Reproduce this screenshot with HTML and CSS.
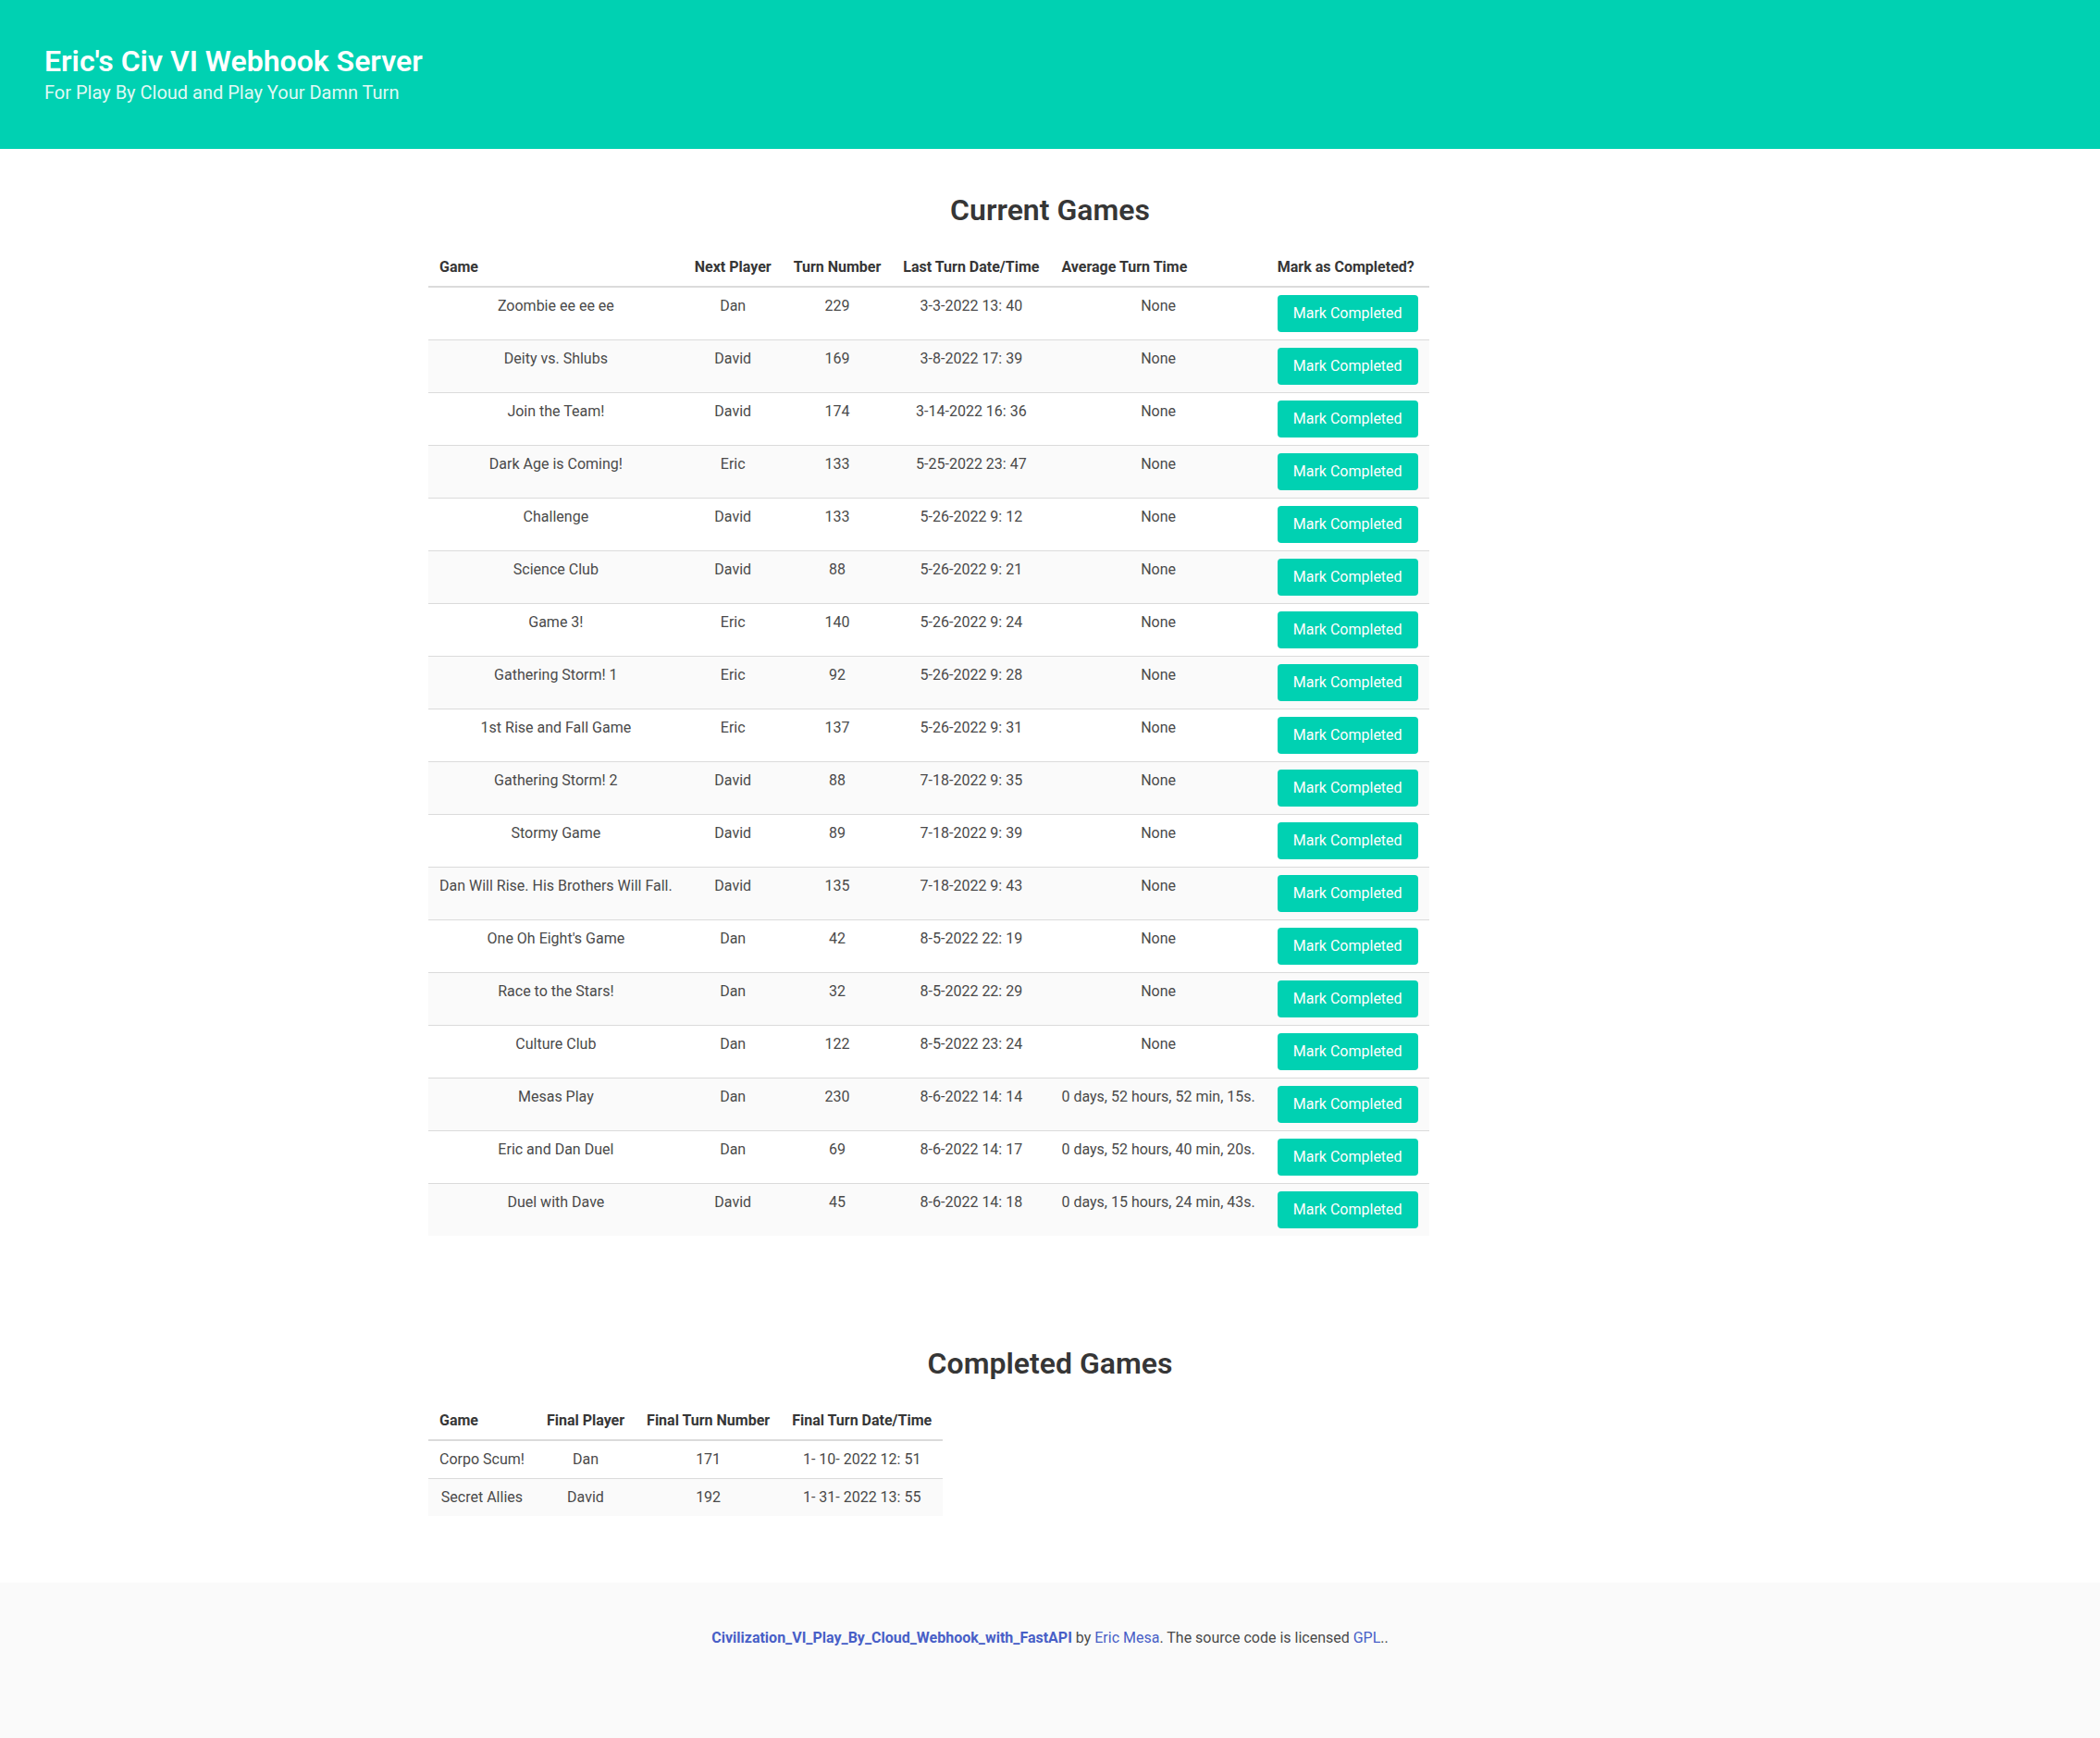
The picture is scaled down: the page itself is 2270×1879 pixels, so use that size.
FILE: index.html
```html
<!DOCTYPE html>
<html lang="en">
<head>
<meta charset="utf-8">
<title>Eric's Civ VI Webhook Server</title>
<link rel="stylesheet" href="styles.css">
</head>
<body>
<section class="hero">
  <div class="hero-body">
    <p class="hero-title">Eric's Civ VI Webhook Server</p>
    <p class="hero-subtitle">For Play By Cloud and Play Your Damn Turn</p>
  </div>
</section>

<section class="section">
  <div class="container">
    <h1 class="title">Current Games</h1>
    <table class="table">
      <thead>
        <tr><th>Game</th><th>Next Player</th><th>Turn Number</th><th>Last Turn Date/Time</th><th>Average Turn Time</th><th>Mark as Completed?</th></tr>
      </thead>
      <tbody>
        <tr><td>Zoombie ee ee ee</td><td>Dan</td><td>229</td><td>3-3-2022 13: 40</td><td>None</td><td class="act"><button class="button">Mark Completed</button></td></tr>
        <tr><td>Deity vs. Shlubs</td><td>David</td><td>169</td><td>3-8-2022 17: 39</td><td>None</td><td class="act"><button class="button">Mark Completed</button></td></tr>
        <tr><td>Join the Team!</td><td>David</td><td>174</td><td>3-14-2022 16: 36</td><td>None</td><td class="act"><button class="button">Mark Completed</button></td></tr>
        <tr><td>Dark Age is Coming!</td><td>Eric</td><td>133</td><td>5-25-2022 23: 47</td><td>None</td><td class="act"><button class="button">Mark Completed</button></td></tr>
        <tr><td>Challenge</td><td>David</td><td>133</td><td>5-26-2022 9: 12</td><td>None</td><td class="act"><button class="button">Mark Completed</button></td></tr>
        <tr><td>Science Club</td><td>David</td><td>88</td><td>5-26-2022 9: 21</td><td>None</td><td class="act"><button class="button">Mark Completed</button></td></tr>
        <tr><td>Game 3!</td><td>Eric</td><td>140</td><td>5-26-2022 9: 24</td><td>None</td><td class="act"><button class="button">Mark Completed</button></td></tr>
        <tr><td>Gathering Storm! 1</td><td>Eric</td><td>92</td><td>5-26-2022 9: 28</td><td>None</td><td class="act"><button class="button">Mark Completed</button></td></tr>
        <tr><td>1st Rise and Fall Game</td><td>Eric</td><td>137</td><td>5-26-2022 9: 31</td><td>None</td><td class="act"><button class="button">Mark Completed</button></td></tr>
        <tr><td>Gathering Storm! 2</td><td>David</td><td>88</td><td>7-18-2022 9: 35</td><td>None</td><td class="act"><button class="button">Mark Completed</button></td></tr>
        <tr><td>Stormy Game</td><td>David</td><td>89</td><td>7-18-2022 9: 39</td><td>None</td><td class="act"><button class="button">Mark Completed</button></td></tr>
        <tr><td>Dan Will Rise. His Brothers Will Fall.</td><td>David</td><td>135</td><td>7-18-2022 9: 43</td><td>None</td><td class="act"><button class="button">Mark Completed</button></td></tr>
        <tr><td>One Oh Eight's Game</td><td>Dan</td><td>42</td><td>8-5-2022 22: 19</td><td>None</td><td class="act"><button class="button">Mark Completed</button></td></tr>
        <tr><td>Race to the Stars!</td><td>Dan</td><td>32</td><td>8-5-2022 22: 29</td><td>None</td><td class="act"><button class="button">Mark Completed</button></td></tr>
        <tr><td>Culture Club</td><td>Dan</td><td>122</td><td>8-5-2022 23: 24</td><td>None</td><td class="act"><button class="button">Mark Completed</button></td></tr>
        <tr><td>Mesas Play</td><td>Dan</td><td>230</td><td>8-6-2022 14: 14</td><td>0 days, 52 hours, 52 min, 15s.</td><td class="act"><button class="button">Mark Completed</button></td></tr>
        <tr><td>Eric and Dan Duel</td><td>Dan</td><td>69</td><td>8-6-2022 14: 17</td><td>0 days, 52 hours, 40 min, 20s.</td><td class="act"><button class="button">Mark Completed</button></td></tr>
        <tr><td>Duel with Dave</td><td>David</td><td>45</td><td>8-6-2022 14: 18</td><td>0 days, 15 hours, 24 min, 43s.</td><td class="act"><button class="button">Mark Completed</button></td></tr>
      </tbody>
    </table>
  </div>
</section>

<section class="section">
  <div class="container">
    <h1 class="title">Completed Games</h1>
    <table class="table">
      <thead>
        <tr><th>Game</th><th>Final Player</th><th>Final Turn Number</th><th>Final Turn Date/Time</th></tr>
      </thead>
      <tbody>
        <tr><td>Corpo Scum!</td><td>Dan</td><td>171</td><td>1- 10- 2022 12: 51</td></tr>
        <tr><td>Secret Allies</td><td>David</td><td>192</td><td>1- 31- 2022 13: 55</td></tr>
      </tbody>
    </table>
  </div>
</section>

<footer class="footer">
  <div class="content">
    <p><strong><a href="#">Civilization_VI_Play_By_Cloud_Webhook_with_FastAPI</a></strong> by <a href="#">Eric Mesa</a>. The source code is licensed <a href="#">GPL</a>..</p>
  </div>
</footer>
</body>
</html>
```

FILE: styles.css
```css
html {
  background: #fff;
  font-size: 16px;
}
body {
  margin: 0;
  font-family: Roboto, "Noto Sans", "Liberation Sans", sans-serif;
  font-size: 1em;
  line-height: 1.5;
  color: #4a4a4a;
  font-weight: 400;
}
p, h1 { margin: 0; }
a { color: #485fc7; text-decoration: none; }
strong { color: #363636; font-weight: 700; }
strong a { color: #485fc7; }

.hero {
  background: #00d1b2;
  color: #fff;
}
.hero-body {
  padding: 48px 48px;
}
.hero-title {
  font-size: 2rem;
  font-weight: 600;
  line-height: 1.125;
  color: #fff;
  margin-bottom: 4px;
}
.hero-subtitle {
  font-size: 1.25rem;
  font-weight: 400;
  line-height: 1.25;
  color: rgba(255, 255, 255, 0.9);
}

.section {
  padding: 48px 24px;
}
.container {
  max-width: 1344px;
  margin: 0 auto;
}
.title {
  font-size: 2rem;
  font-weight: 600;
  line-height: 1.125;
  color: #363636;
  text-align: center;
  margin-bottom: 24px;
}

.table {
  border-collapse: collapse;
  border-spacing: 0;
  background: #fff;
  color: #363636;
  margin-bottom: 24px;
}
.table th {
  color: #363636;
  font-weight: 700;
  text-align: left;
  padding: 8px 12px;
  vertical-align: top;
  border-bottom: 2px solid #dbdbdb;
}
.table td {
  color: #4a4a4a;
  text-align: center;
  padding: 8px 12px;
  vertical-align: top;
  border-bottom: 1px solid #dbdbdb;
}
.table tbody tr:nth-child(even) { background: #fafafa; }
.table tbody tr:last-child td { border-bottom-width: 0; }
.table td.act { text-align: left; }

.button {
  display: inline-flex;
  align-items: center;
  justify-content: center;
  height: 2.5em;
  padding: 7px 16px;
  font-family: inherit;
  font-size: 1rem;
  line-height: 1.5;
  color: #fff;
  background: #00d1b2;
  border: 1px solid transparent;
  border-radius: 4px;
  cursor: pointer;
  box-sizing: border-box;
}

.footer {
  background: #fafafa;
  padding: 48px 24px 96px;
}
.content {
  text-align: center;
}
```
